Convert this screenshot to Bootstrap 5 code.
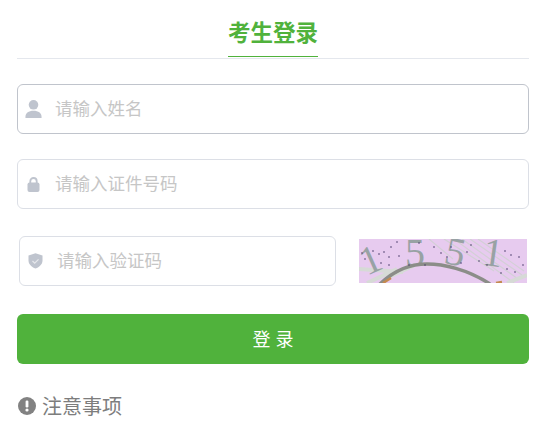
<!DOCTYPE html>
<html lang="zh">
<head>
<meta charset="utf-8">
<title>考生登录</title>
<link rel="stylesheet" href="https://cdn.jsdelivr.net/npm/bootstrap@5.3.0/dist/css/bootstrap.min.css">
<style>
html,body{height:100%;overflow:hidden}
body{font-family:"Noto Sans CJK SC","Liberation Sans",sans-serif;background:#fff;color:#888}
.login-wrap{padding:0 16px 0 17px}
.head-line{border-bottom:1px solid #e4e7ed;height:59px;align-items:flex-start}
.head-tab{font-size:22.500px;line-height:32px;font-weight:700;color:#50b23c;padding:15px 0 0;height:57px;border-bottom:1px solid #50b23c}
.field-box{height:50px;border:1px solid #dcdfe6;border-radius:6px;background:#fff}
.field-box.is-hover{border-color:#c0c4cc}
.field-icon{width:38px;flex:none;padding-left:7px}
.field-icon svg{display:block}
.field-input{border:0;outline:0;padding:0 0 4px;box-shadow:none;font-size:17.500px;color:#606266;background:transparent;flex:1;min-width:0;height:100%;margin-left:-1px}
.field-input::placeholder{color:#c6c6c6;opacity:1}
.row-name{margin-top:25px}
.row-id{margin-top:25px}
.row-code{margin-top:27px}
.code-box{width:317px;margin-left:2px}
.code-pic{display:block;margin-left:23px;margin-right:2px}
.btn-login{height:50px;margin-top:28px;background:#50b23c;border:0;border-radius:6px;color:#fff;font-size:18px;padding:0 0 2px;line-height:48px;word-spacing:1px}
.btn-login:hover{background:#50b23c;color:#fff}
.note-row{margin-top:29px;font-size:20px;line-height:26px;color:#7d7d7d;gap:6px;padding-left:1px}
</style>
</head>
<body>
<div class="login-wrap">
  <div class="head-line d-flex justify-content-center">
    <div class="head-tab">考生登录</div>
  </div>

  <div class="field-box is-hover row-name d-flex align-items-center">
    <span class="field-icon"><svg width="17" height="18" viewBox="0 0 17 18"><circle cx="8.500" cy="4.800" r="4.800" fill="#bfc4ce"/><path d="M0.500 18c-.6-4.600 2.800-7.200 8-7.200s8.600 2.600 8 7.200z" fill="#bfc4ce"/></svg></span>
    <input class="field-input" type="text" placeholder="请输入姓名">
  </div>

  <div class="field-box row-id d-flex align-items-center">
    <span class="field-icon"><svg width="17" height="15" viewBox="0 0 17 15"><path d="M5.300 7V4.200a3.200 3.200 0 0 1 6.400 0V7" fill="none" stroke="#bfc4ce" stroke-width="1.800"/><rect x="2.500" y="5.500" width="12" height="9.500" rx="2" fill="#bfc4ce"/></svg></span>
    <input class="field-input" type="text" placeholder="请输入证件号码">
  </div>

  <div class="row-code d-flex align-items-center">
    <div class="field-box code-box d-flex align-items-center">
      <span class="field-icon"><svg width="17" height="16" viewBox="0 0 17 16"><path d="M8.500 .3l7 2.200v5c0 3.800-3 6.500-7 8-4-1.500-7-4.200-7-8v-5z" fill="#bfc4ce"/><path d="M5.500 8l2.200 2.200 3.800-3.800" fill="none" stroke="#e6e8ec" stroke-width="1.200"/></svg></span>
      <input class="field-input" type="text" placeholder="请输入验证码">
    </div>
    <svg class="code-pic" width="168" height="44" viewBox="0 0 168 44" role="img" aria-label="验证码">
      <rect width="168" height="44" fill="#e7cbef"/>
      <path d="M95 0l60 44M103 0l56 40M111 0l52 36M119 0l46 32M85 0l50 32M70 0l24 20" stroke="#d3d0d6" stroke-width="1.200" fill="none"/>
      <path d="M0 30l44 3M8 44l30-14M30 38l26-12M148 44l20-8" stroke="#d6dad6" stroke-width="4" fill="none"/>
      <g font-family="Liberation Serif,serif" font-size="40" fill="#98a2a4">
        <text x="2" y="34" transform="rotate(-24 12 22)">1</text>
        <text x="46" y="27">5</text>
        <text x="86" y="26" transform="rotate(12 96 14)">5</text>
        <text x="124" y="27" transform="rotate(8 134 14)">1</text>
      </g>
      <path d="M20 46C36 30 52 25 68 25s40 5 63 20" fill="none" stroke="#8b8d88" stroke-width="3.500"/>
      <path d="M32 39l-8 5M137 44l6-1" stroke="#c48a50" stroke-width="2.500" fill="none"/>
      <g fill="#4a3a6a">
        <circle cx="14" cy="12" r=".8"/><circle cx="20" cy="15" r=".8"/><circle cx="25" cy="13" r=".8"/><circle cx="30" cy="18" r=".8"/><circle cx="6" cy="20" r=".8"/><circle cx="32" cy="8" r=".8"/><circle cx="38" cy="3" r=".8"/><circle cx="22" cy="24" r=".8"/><circle cx="30" cy="26" r=".8"/><circle cx="40" cy="17" r=".8"/><circle cx="75" cy="8" r=".8"/><circle cx="82" cy="14" r=".8"/><circle cx="88" cy="18" r=".8"/><circle cx="92" cy="8" r=".8"/><circle cx="102" cy="24" r=".8"/><circle cx="112" cy="6" r=".8"/><circle cx="120" cy="22" r=".8"/><circle cx="108" cy="13" r=".8"/><circle cx="128" cy="26" r=".8"/><circle cx="146" cy="12" r=".8"/><circle cx="152" cy="16" r=".8"/><circle cx="160" cy="18" r=".8"/><circle cx="164" cy="26" r=".8"/><circle cx="148" cy="30" r=".8"/><circle cx="156" cy="33" r=".8"/><circle cx="142" cy="34" r=".8"/><circle cx="3" cy="14" r=".8"/><circle cx="50" cy="26" r=".8"/><circle cx="66" cy="26" r=".8"/><circle cx="60" cy="4" r=".8"/>
      </g>
    </svg>
  </div>

  <button type="button" class="btn btn-login w-100 d-block">登 录</button>

  <div class="note-row d-flex align-items-center">
    <svg width="18" height="18" viewBox="0 0 18 18"><circle cx="9" cy="9" r="9" fill="#828282"/><rect x="7.600" y="3.500" width="2.800" height="7" rx="1.200" fill="#fff"/><circle cx="9" cy="13" r="1.600" fill="#fff"/></svg>
    <span>注意事项</span>
  </div>
</div>
<script src="https://cdn.jsdelivr.net/npm/bootstrap@5.3.0/dist/js/bootstrap.bundle.min.js"></script>
</body>
</html>
